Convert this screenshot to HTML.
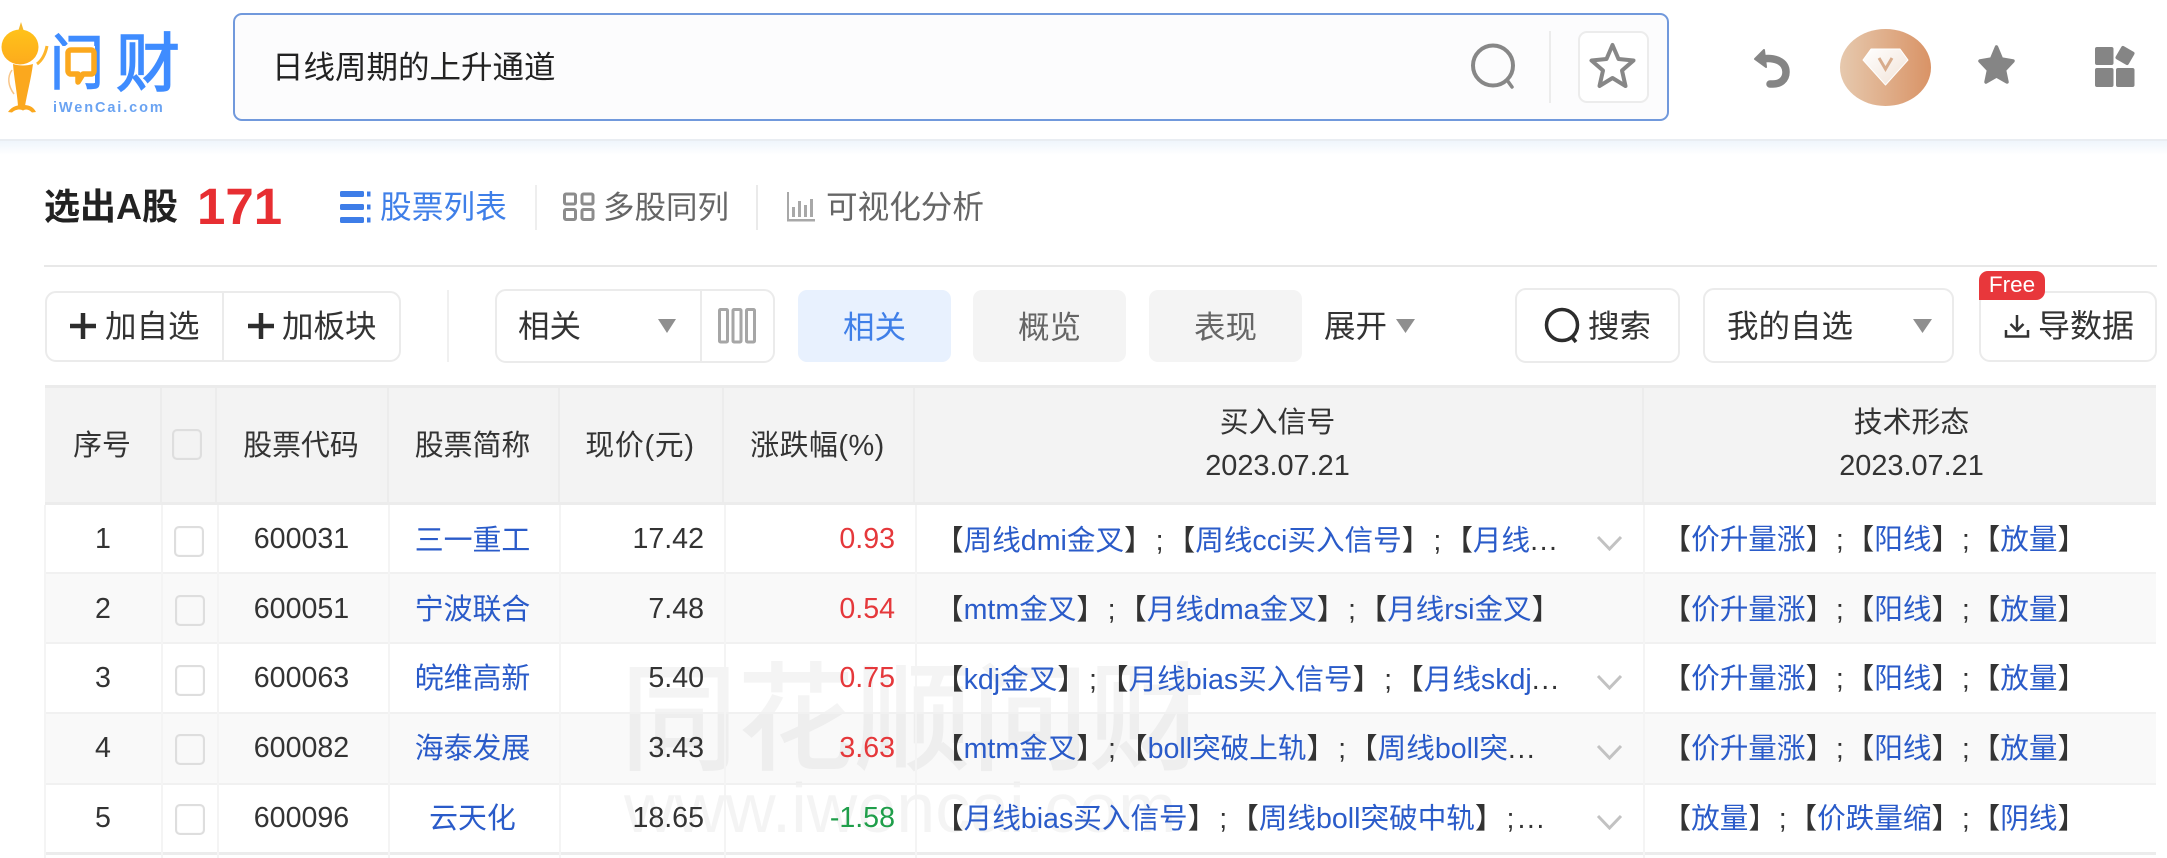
<!DOCTYPE html>
<html lang="zh"><head><meta charset="utf-8"><title>问财</title>
<style>
html,body{margin:0;padding:0;background:#fff}
#p{position:relative;width:2167px;height:858px;overflow:hidden;background:#fff;font-family:"Liberation Sans","Noto Sans CJK SC",sans-serif;color:#333}
#p div,#p svg{position:absolute}
.t{white-space:nowrap;line-height:40px;height:40px}
.h{font-size:28.9px;color:#333}
.c{text-align:center}
.r{text-align:right}
.b{border:2px solid #ebebeb;border-radius:11px;box-sizing:border-box;background:#fff}
.v{background:#ececec;width:2px}
.cb{width:30px;height:31px;border:2px solid #dedede;border-radius:5px;box-sizing:border-box;background:#fff;box-shadow:inset 0 0 1px #e4e4e4}
.s{font-size:28.6px;color:#333}
.s i,.n{font-style:normal;color:#2a5bc9}
.s u{text-decoration:none;margin:0 2.6px}
.s.e u{margin:0 3px}
.s.k u{margin:0 1.8px}
.s span{letter-spacing:1.5px}
.g{font-size:28.6px;color:#333}
.red{color:#e5383b;font-size:28.6px}
.grn{color:#1f9e4a;font-size:28.6px}
.row{left:45px;width:2111px;height:70px}
.l{top:505px;width:2px;height:353px;background:#f4f4f4}
</style></head><body><div id="p">

<!-- header -->
<div style="left:0;top:139px;width:2167px;height:2px;background:#e9edf2"></div>
<div style="left:0;top:141px;width:2167px;height:14px;background:linear-gradient(#eff5fc,#fff)"></div>

<!-- logo -->
<svg style="left:0;top:0" width="200" height="130" viewBox="0 0 200 130">
<path d="M21 22l2.500 8h-5z" fill="#f5b830"/>
<defs><linearGradient id="o" x1="0" y1="0" x2="0" y2="1"><stop offset="0" stop-color="#ffc21a"/><stop offset="1" stop-color="#fdab1c"/></linearGradient></defs>
<ellipse cx="20" cy="47" rx="18.500" ry="17.500" fill="url(#o)"/>
<path d="M37 64c4-3 8-8 10-18" stroke="#fdb52a" stroke-width="3" fill="none"/>
<path d="M13 64c6 2 14 2 20 0-2 15-6 30-8 42h-7c-1-14-4-28-5-42z" fill="#fba81e"/>
<path d="M12 70c-5 7-4 16 2 24" stroke="#f8c68a" stroke-width="1.500" fill="none"/>
<path d="M8 112c4-6 10-7 15-7s10 1 13 7l-4 .5c-3-3-6-4-9-2-3-2-8-1-11 2z" fill="#fba81e"/>
<text x="0" y="84" font-size="60" fill="#3f8cff" stroke="#3f8cff" stroke-width="1.600" transform="translate(50 0) scale(.9 1)" style="font-family:'Noto Sans CJK SC',sans-serif">问</text>
<text x="116" y="86" font-size="64" fill="#3f8cff" stroke="#3f8cff" stroke-width="1.600" style="font-family:'Noto Sans CJK SC',sans-serif">财</text>
<rect x="62" y="46" width="33" height="37" fill="#fff"/>
<path d="M71 50h20a3 3 0 0 1 3 3v18a3 3 0 0 1-3 3h-8l-5 8v-8h-7a3 3 0 0 1-3-3V53a3 3 0 0 1 3-3z" fill="none" stroke="#fba81e" stroke-width="5.500" stroke-linejoin="round"/>
<text x="53" y="112" font-size="14.500" font-weight="700" letter-spacing="1.900" fill="#6aa3f2">iWenCai.com</text>
</svg>

<!-- search box -->
<div style="left:233px;top:13px;width:1436px;height:108px;border:2px solid #7199dc;border-radius:9px;box-sizing:border-box;background:#fcfcfd"></div>
<div class="t" style="left:272px;top:47px;font-size:31.500px;color:#222">日线周期的上升通道</div>
<svg style="left:1465px;top:38px" width="56" height="56" viewBox="0 0 56 56"><ellipse cx="28" cy="27.500" rx="20" ry="20" fill="none" stroke="#878787" stroke-width="4"/><path d="M42 42l5 7" stroke="#878787" stroke-width="3.500" stroke-linecap="round"/></svg>
<div style="left:1549px;top:31px;width:2px;height:72px;background:#ececec"></div>
<div style="left:1578px;top:31px;width:71px;height:72px;border:2px solid #ececec;border-radius:9px;box-sizing:border-box;background:#fff"></div>
<svg style="left:1585px;top:40px" width="56" height="52" viewBox="0 0 56 52"><path d="M27.500 5l6 14 15 1.500-11.500 10 3.500 15.500-13-8-13 8 3.500-15.500L6.500 20.500l15-1.500z" fill="none" stroke="#878787" stroke-width="4" stroke-linejoin="round"/></svg>

<!-- right icons -->
<svg style="left:1750px;top:44px" width="44" height="46" viewBox="0 0 44 46"><path d="M14 6L5 15l11 8z" fill="#858585" stroke="#858585" stroke-width="2" stroke-linejoin="round"/><path d="M12 15c12-2 24 2 24 13 0 8-6 12-13 12h-3" fill="none" stroke="#858585" stroke-width="7.500" stroke-linecap="round"/></svg>
<svg style="left:1840px;top:29px" width="91" height="77" viewBox="0 0 91 77"><defs><linearGradient id="d" x1="0" x2="1" y1="0" y2="0"><stop offset="0" stop-color="#e6c9ae"/><stop offset="1" stop-color="#d99366"/></linearGradient><linearGradient id="w" x1="0" x2="1" y1="0" y2="1"><stop offset="0" stop-color="#fff"/><stop offset="1" stop-color="#f1e2d6"/></linearGradient></defs><ellipse cx="45.500" cy="38.500" rx="45.500" ry="38.500" fill="url(#d)"/><path d="M31 20h29l8 11-22.500 25L23 31z" fill="url(#w)" stroke="#fff" stroke-width="1" stroke-linejoin="round"/><path d="M39 29l6.500 11L52 29" fill="none" stroke="#d8ac8c" stroke-width="3"/></svg>
<svg style="left:1975px;top:42px" width="44" height="44" viewBox="0 0 44 44"><path d="M21.500 5l5 12 11.500 2-8.500 9 2.500 12-10.500-6-10.500 6 2.500-12-8.500-9 11.500-2z" fill="#858585" stroke="#858585" stroke-width="3.500" stroke-linejoin="round"/></svg>
<svg style="left:2092px;top:44px" width="46" height="44" viewBox="0 0 46 44"><g fill="#858585"><rect x="3" y="3" width="18.500" height="18" rx="2"/><rect x="3" y="24" width="18.500" height="19" rx="2"/><rect x="24" y="24" width="18.500" height="19" rx="2"/><rect x="25.500" y="4" width="15" height="15" rx="2" transform="rotate(30 33 11.500)"/></g></svg>

<!-- title row -->
<div class="t" style="left:44px;top:187px;font-size:36px;font-weight:700;color:#222">选出A股</div>
<div class="t" style="left:197px;top:187px;font-size:51px;font-weight:700;color:#e72e32">171</div>
<svg style="left:339px;top:190px" width="34" height="34" viewBox="0 0 34 34"><g fill="#3d7de8"><rect x="1" y="1" width="24" height="6" rx="1.500"/><rect x="1" y="14" width="24" height="6" rx="1.500"/><rect x="1" y="27" width="24" height="6" rx="1.500"/><rect x="28" y="1.500" width="3.500" height="5"/><rect x="28" y="14.500" width="3.500" height="5"/><rect x="28" y="27.500" width="3.500" height="5"/></g></svg>
<div class="t" style="left:380px;top:187px;font-size:31.700px;color:#3f7fe8">股票列表</div>
<div style="left:535px;top:185px;width:2px;height:45px;background:#eee"></div>
<svg style="left:562px;top:192px" width="34" height="30" viewBox="0 0 34 30"><g fill="none" stroke="#8c8c8c" stroke-width="3"><rect x="2.500" y="2" width="11" height="10" rx="1.500"/><rect x="20" y="2" width="11" height="10" rx="1.500"/><rect x="2.500" y="17.500" width="11" height="10" rx="1.500"/><rect x="20" y="17.500" width="11" height="10" rx="1.500"/></g></svg>
<div class="t" style="left:603px;top:187px;font-size:31.500px;color:#666">多股同列</div>
<div style="left:756px;top:185px;width:2px;height:45px;background:#eaeaea"></div>
<svg style="left:786px;top:191px" width="30" height="32" viewBox="0 0 30 32"><g fill="#a8a8a8"><rect x="1" y="1" width="2" height="29"/><rect x="1" y="28" width="28" height="2.500"/><rect x="6" y="16" width="3" height="10"/><rect x="12" y="10" width="3" height="16"/><rect x="18" y="14" width="3" height="12"/><rect x="24" y="8" width="3" height="18"/></g></svg>
<div class="t" style="left:826px;top:187px;font-size:31.600px;color:#666">可视化分析</div>
<div style="left:44px;top:265px;width:2113px;height:2px;background:#e8e8e8"></div>

<!-- toolbar -->
<div class="b" style="left:45px;top:291px;width:356px;height:71px"></div>
<div style="left:222px;top:292px;width:2px;height:69px;background:#ebebeb"></div>
<svg style="left:69px;top:312px" width="28" height="28" viewBox="0 0 28 28"><path d="M14 1v26M1 14h26" stroke="#2d2d2d" stroke-width="4.500"/></svg>
<div class="t" style="left:105px;top:306px;font-size:31.500px;color:#333">加自选</div>
<svg style="left:247px;top:312px" width="28" height="28" viewBox="0 0 28 28"><path d="M14 1v26M1 14h26" stroke="#2d2d2d" stroke-width="4.500"/></svg>
<div class="t" style="left:282px;top:306px;font-size:31.500px;color:#333">加板块</div>
<div style="left:447px;top:290px;width:2px;height:72px;background:#f0f0f0"></div>
<div class="b" style="left:495px;top:289px;width:280px;height:74px"></div>
<div style="left:700px;top:290px;width:2px;height:72px;background:#ebebeb"></div>
<div class="t" style="left:518px;top:306px;font-size:31.500px;color:#333">相关</div>
<svg style="left:657px;top:319px" width="20" height="14" viewBox="0 0 20 14"><path d="M1 0h18L10 14z" fill="#8f8f8f"/></svg>
<svg style="left:718px;top:308px" width="38" height="36" viewBox="0 0 38 36"><g fill="none" stroke="#a6a6a6" stroke-width="3"><rect x="1.500" y="1.500" width="8" height="32.500" rx="1"/><rect x="15" y="1.500" width="8" height="32.500" rx="1"/><rect x="28.500" y="1.500" width="8" height="32.500" rx="1"/></g></svg>
<div style="left:798px;top:290px;width:153px;height:72px;background:#e8f1fe;border-radius:9px"></div>
<div class="t c" style="left:798px;width:153px;top:307px;font-size:31.500px;color:#3f7fe8">相关</div>
<div style="left:973px;top:290px;width:153px;height:72px;background:#f4f4f4;border-radius:9px"></div>
<div class="t c" style="left:973px;width:153px;top:307px;font-size:31.500px;color:#666">概览</div>
<div style="left:1149px;top:290px;width:153px;height:72px;background:#f4f4f4;border-radius:9px"></div>
<div class="t c" style="left:1149px;width:153px;top:307px;font-size:31.500px;color:#666">表现</div>
<div class="t" style="left:1324px;top:306px;font-size:31.500px;color:#333">展开</div>
<svg style="left:1396px;top:319px" width="19" height="14" viewBox="0 0 19 14"><path d="M0 0h19L9.500 14z" fill="#8f8f8f"/></svg>

<div class="b" style="left:1515px;top:288px;width:165px;height:75px"></div>
<svg style="left:1543px;top:306px" width="40" height="40" viewBox="0 0 40 40"><circle cx="19" cy="19" r="15.500" fill="none" stroke="#2c2c2c" stroke-width="3.500"/><path d="M29 31l4 5" stroke="#2c2c2c" stroke-width="3.500"/></svg>
<div class="t" style="left:1588px;top:306px;font-size:31.500px;color:#333">搜索</div>
<div class="b" style="left:1703px;top:288px;width:251px;height:75px"></div>
<div class="t" style="left:1727px;top:306px;font-size:31.500px;color:#333">我的自选</div>
<svg style="left:1913px;top:319px" width="19" height="14" viewBox="0 0 19 14"><path d="M0 0h19L9.500 14z" fill="#8f8f8f"/></svg>
<div class="b" style="left:1979px;top:291px;width:178px;height:71px"></div>
<svg style="left:2004px;top:313px" width="26" height="26" viewBox="0 0 26 26"><path d="M13 2v15M6.500 11l6.500 6.500L19.500 11M2 17v6.500h22V17" fill="none" stroke="#333" stroke-width="2.500"/></svg>
<div class="t" style="left:2038px;top:306px;font-size:32px;color:#333">导数据</div>
<div style="left:1979px;top:271px;width:66px;height:29px;background:#e8373b;border-radius:9px 9px 9px 0"></div>
<div class="t c" style="left:1979px;width:66px;top:265px;font-size:22.500px;color:#fff">Free</div>

<!-- table backgrounds -->
<div style="left:45px;top:385px;width:2111px;height:3px;background:#ebebeb"></div>
<div style="left:45px;top:388px;width:2111px;height:115px;background:#f3f3f3"></div>
<div style="left:45px;top:502px;width:2111px;height:3px;background:#ececec"></div>
<div class="row" style="top:573px;background:#f9f9f9"></div>
<div class="row" style="top:713px;background:#f9f9f9"></div>

<!-- watermark -->
<div class="t" style="left:620px;top:645px;height:130px;line-height:130px;font-size:118px;font-weight:500;letter-spacing:-1px;color:rgba(0,0,0,.045);font-family:'Noto Sans CJK SC',sans-serif">同花顺问财</div>
<div class="t" style="left:624px;top:778px;height:60px;line-height:60px;font-size:70px;color:rgba(0,0,0,.045)">www.iwencai.com</div>

<!-- row lines -->
<div style="left:45px;top:572px;width:2111px;height:2px;background:#f1f1f1"></div>
<div style="left:45px;top:642px;width:2111px;height:2px;background:#f1f1f1"></div>
<div style="left:45px;top:712px;width:2111px;height:2px;background:#f1f1f1"></div>
<div style="left:45px;top:783px;width:2111px;height:2px;background:#f1f1f1"></div>
<div style="left:45px;top:852px;width:2111px;height:3px;background:#ececec"></div>

<!-- vertical lines: header -->
<div class="v" style="left:160px;top:388px;height:115px"></div>
<div class="v" style="left:215px;top:388px;height:115px"></div>
<div class="v" style="left:387px;top:388px;height:115px"></div>
<div class="v" style="left:558px;top:388px;height:115px"></div>
<div class="v" style="left:722px;top:388px;height:115px"></div>
<div class="v" style="left:913px;top:388px;height:115px"></div>
<div class="v" style="left:1642px;top:388px;height:115px"></div>
<!-- vertical lines: body -->
<div class="l" style="left:44px"></div>
<div class="l" style="left:161px"></div>
<div class="l" style="left:217px"></div>
<div class="l" style="left:388px"></div>
<div class="l" style="left:559px"></div>
<div class="l" style="left:724px"></div>
<div class="l" style="left:915px"></div>
<div class="l" style="left:1643px"></div>

<!-- header text -->
<div class="t h c" style="left:44px;width:116px;top:426px">序号</div>
<div class="cb" style="left:172px;top:429px;background:#f3f3f3"></div>
<div class="t h c" style="left:215px;width:172px;top:426px">股票代码</div>
<div class="t h c" style="left:387px;width:171px;top:426px">股票简称</div>
<div class="t h c" style="left:558px;width:164px;top:426px;letter-spacing:.7px">现价(元)</div>
<div class="t h c" style="left:722px;width:191px;top:426px;letter-spacing:.5px">涨跌幅(%)</div>
<div class="t h c" style="left:913px;width:729px;top:403px">买入信号</div>
<div class="t h c" style="left:913px;width:729px;top:446px">2023.07.21</div>
<div class="t h c" style="left:1643px;width:537px;top:403px">技术形态</div>
<div class="t h c" style="left:1643px;width:537px;top:446px">2023.07.21</div>

<!-- row 1 -->
<div class="t g c" style="left:45px;width:116px;top:519px">1</div>
<div class="cb" style="left:174px;top:526px"></div>
<div class="t g c" style="left:216px;width:171px;top:519px">600031</div>
<div class="t n c" style="left:387px;width:171px;top:521px;font-size:28.900px">三一重工</div>
<div class="t g r" style="left:559px;width:145px;top:519px">17.42</div>
<div class="t red r" style="left:724px;width:171px;top:519px">0.93</div>
<div class="t s e" style="left:935px;top:521px">【<i>周线dmi金叉</i>】<u>;</u>【<i>周线cci买入信号</i>】<u>;</u>【<i>月线</i><span>...</span></div>
<div class="t s k" style="left:1662.500px;top:520px">【<i>价升量涨</i>】<u>;</u>【<i>阳线</i>】<u>;</u>【<i>放量</i>】</div>
<svg style="left:1596px;top:535px" width="27" height="16" viewBox="0 0 27 16"><path d="M2 2l11.500 12L25 2" fill="none" stroke="#c2c2c2" stroke-width="3"/></svg>

<!-- row 2 -->
<div class="t g c" style="left:45px;width:116px;top:589px">2</div>
<div class="cb" style="left:175px;top:595px;background:#f9f9f9"></div>
<div class="t g c" style="left:216px;width:171px;top:589px">600051</div>
<div class="t n c" style="left:387px;width:171px;top:590px;font-size:28.900px">宁波联合</div>
<div class="t g r" style="left:559px;width:145px;top:589px">7.48</div>
<div class="t red r" style="left:724px;width:171px;top:589px">0.54</div>
<div class="t s" style="left:935px;top:590px">【<i>mtm金叉</i>】<u>;</u>【<i>月线dma金叉</i>】<u>;</u>【<i>月线rsi金叉</i>】</div>
<div class="t s k" style="left:1662.500px;top:590px">【<i>价升量涨</i>】<u>;</u>【<i>阳线</i>】<u>;</u>【<i>放量</i>】</div>

<!-- row 3 -->
<div class="t g c" style="left:45px;width:116px;top:658px">3</div>
<div class="cb" style="left:175px;top:665px"></div>
<div class="t g c" style="left:216px;width:171px;top:658px">600063</div>
<div class="t n c" style="left:387px;width:171px;top:659px;font-size:28.900px">皖维高新</div>
<div class="t g r" style="left:559px;width:145px;top:658px">5.40</div>
<div class="t red r" style="left:724px;width:171px;top:658px">0.75</div>
<div class="t s e" style="left:935px;top:660px">【<i>kdj金叉</i>】<u>;</u>【<i>月线bias买入信号</i>】<u>;</u>【<i>月线skdj</i><span>...</span></div>
<div class="t s k" style="left:1662.500px;top:659px">【<i>价升量涨</i>】<u>;</u>【<i>阳线</i>】<u>;</u>【<i>放量</i>】</div>
<svg style="left:1596px;top:674px" width="27" height="16" viewBox="0 0 27 16"><path d="M2 2l11.500 12L25 2" fill="none" stroke="#c2c2c2" stroke-width="3"/></svg>

<!-- row 4 -->
<div class="t g c" style="left:45px;width:116px;top:728px">4</div>
<div class="cb" style="left:175px;top:734px;background:#f9f9f9"></div>
<div class="t g c" style="left:216px;width:171px;top:728px">600082</div>
<div class="t n c" style="left:387px;width:171px;top:729px;font-size:28.900px">海泰发展</div>
<div class="t g r" style="left:559px;width:145px;top:728px">3.43</div>
<div class="t red r" style="left:724px;width:171px;top:728px">3.63</div>
<div class="t s e" style="left:935px;top:729px">【<i>mtm金叉</i>】<u>;</u>【<i>boll突破上轨</i>】<u>;</u>【<i>周线boll突</i><span>...</span></div>
<div class="t s k" style="left:1662.500px;top:729px">【<i>价升量涨</i>】<u>;</u>【<i>阳线</i>】<u>;</u>【<i>放量</i>】</div>
<svg style="left:1596px;top:744px" width="27" height="16" viewBox="0 0 27 16"><path d="M2 2l11.500 12L25 2" fill="none" stroke="#c2c2c2" stroke-width="3"/></svg>

<!-- row 5 -->
<div class="t g c" style="left:45px;width:116px;top:798px">5</div>
<div class="cb" style="left:175px;top:804px"></div>
<div class="t g c" style="left:216px;width:171px;top:798px">600096</div>
<div class="t n c" style="left:387px;width:171px;top:799px;font-size:28.900px">云天化</div>
<div class="t g r" style="left:559px;width:145px;top:798px">18.65</div>
<div class="t grn r" style="left:724px;width:171px;top:798px">-1.58</div>
<div class="t s e" style="left:935px;top:799px">【<i>月线bias买入信号</i>】<u>;</u>【<i>周线boll突破中轨</i>】<u>;</u><span>...</span></div>
<div class="t s k" style="left:1662.500px;top:799px">【<i>放量</i>】<u>;</u>【<i>价跌量缩</i>】<u>;</u>【<i>阴线</i>】</div>
<svg style="left:1596px;top:814px" width="27" height="16" viewBox="0 0 27 16"><path d="M2 2l11.500 12L25 2" fill="none" stroke="#c2c2c2" stroke-width="3"/></svg>

</div></body></html>
